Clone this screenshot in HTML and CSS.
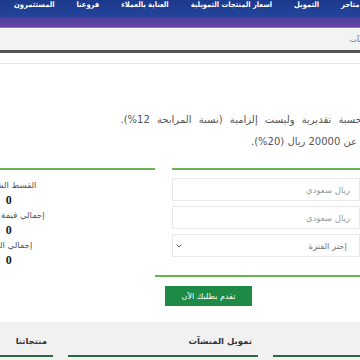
FILE: index.html
```html
<!DOCTYPE html>
<html lang="ar" dir="rtl">
<head>
    <meta charset="UTF-8">
    <title>حاسبة التمويل</title>
    <meta name="viewport" content="width=device-width, initial-scale=1.0">
    <link rel="stylesheet" href="styles.css">
</head>
<body>
    <header class="topbar">
        <nav class="inner nav">
            <a href="#">تملك متاجر</a>
            <a href="#">التمويل</a>
            <a href="#">اسعار المنتجات التمويلية</a>
            <a href="#">العناية بالعملاء</a>
            <a href="#">فروعنا</a>
            <a href="#">المستثمرون</a>
        </nav>
    </header>
    <div class="band"></div>

    <div class="crumbs">
        <div class="inner crumbs-text">تمويل المنشآت</div>
    </div>
    <div class="rule"></div>

    <main class="inner">
        <p class="note">
            <span class="spaced">* النتائج الظاهرة في هذه الحسبة تقديرية وليست إلزامية (نسبة المرابحة 12%).</span><br>
            * يجب ألا يقل مبلغ الدفعة الأولى عن 20000 ريال (20%).
        </p>

        <section class="calc">
            <div class="form-col">
                <div class="row">
                    <label>قيمة المنتج</label>
                    <input type="text" placeholder="ريال سعودي">
                </div>
                <div class="row">
                    <label>الدفعة الأولى</label>
                    <input type="text" placeholder="ريال سعودي">
                </div>
                <div class="row">
                    <label>فترة التمويل</label>
                    <div class="select">
                        <span>إختر الفترة</span>
                        <svg width="6" height="4" viewBox="0 0 6 4"><path d="M0.5 0.5 L3 3 L5.5 0.5" fill="none" stroke="#666" stroke-width="1"/></svg>
                    </div>
                </div>
            </div>

            <div class="result-col">
                <div class="label">القسط الشهري</div>
                <div class="value">0</div>
                <div class="label">إجمالي قيمة التمويل</div>
                <div class="value">0</div>
                <div class="label">إجمالي المبلغ</div>
                <div class="value">0</div>
            </div>
        </section>

        <div class="actions">
            <button>تقدم بطلبك الآن</button>
        </div>
    </main>

    <footer class="footer">
        <div class="inner cols">
            <div class="col"><h4>عن البنك</h4></div>
            <div class="col"><h4>تمويل المنشآت</h4></div>
            <div class="col"><h4>منتجاتنا</h4></div>
        </div>
    </footer>
</body>
</html>
```

FILE: styles.css
```css
html, body {
    margin: 0;
    width: 360px;
    height: 360px;
    overflow: hidden;
    background: #fff;
    font-family: "DejaVu Sans", "Noto Sans", sans-serif;
}

.inner {
    width: 600px;
    margin-right: -103px;
    box-sizing: border-box;
}

.topbar {
    height: 17px;
    background: linear-gradient(#1b3a8c, #24449c);
    overflow: hidden;
}

.nav {
    display: flex;
    gap: 22px;
    padding-right: 85px;
    white-space: nowrap;
}

.nav a {
    color: #fff;
    text-decoration: none;
    font-family: "DejaVu Sans Condensed", "DejaVu Sans", sans-serif;
    font-size: 7.5px;
    line-height: 9px;
    font-weight: bold;
}

.band {
    height: 10px;
    background: linear-gradient(#4f3c9a, #6448a8);
    border-bottom: 1px solid #8a78bf;
}

.crumbs {
    margin-top: 1px;
    height: 21px;
    background: #f3f3f3;
    border-bottom: 3px solid #555;
}

.crumbs-text {
    padding-right: 63px;
    font-size: 8px;
    line-height: 22px;
    color: #777;
}

.rule {
    margin-top: 10px;
    height: 1px;
    background: #f1e3c6;
}

.note {
    margin: 45px -32px 0 0;
    font-size: 10px;
    line-height: 22px;
    color: #555;
}

.note .spaced {
    word-spacing: 4px;
}

.calc {
    display: grid;
    grid-template-columns: 1fr 1fr;
    gap: 17px;
    margin-top: 15px;
}

.form-col {
    border-top: 2px solid #68b44e;
    padding-top: 8px;
    display: flex;
    flex-direction: column;
    gap: 5px;
}

.row {
    display: flex;
    align-items: center;
}

.row label {
    width: 95px;
    font-size: 8px;
    color: #555;
    padding-right: 8px;
}

.row input, .select {
    width: 188px;
    height: 23px;
    box-sizing: border-box;
    border: 1px solid #e8e8e8;
    background: #fff;
    font-family: inherit;
    font-size: 8.5px;
    padding: 0 9px;
    color: #444;
}

.row input::placeholder {
    color: #999;
}

.select {
    display: flex;
    align-items: center;
    justify-content: space-between;
    padding: 0 12px 0 3px;
    color: #777;
}

.result-col {
    border-top: 2px solid #68b44e;
    padding-top: 9px;
    text-align: center;
}

.result-col .label {
    font-size: 8.5px;
    line-height: 12px;
    color: #555;
}

.result-col .value {
    font-family: "Liberation Serif", serif;
    font-weight: bold;
    font-size: 12px;
    line-height: 18px;
    color: #222;
}

.actions {
    width: 308px;
    margin-top: 6px;
    border-top: 2px solid #68b44e;
    padding: 9px 0 0 10px;
    display: flex;
    justify-content: flex-end;
    box-sizing: border-box;
}

.actions button {
    background: #1d8a45;
    color: #fff;
    border: none;
    font-family: inherit;
    font-size: 8px;
    width: 87px;
    height: 20px;
    padding: 0;
}

.footer {
    margin-top: 16px;
    background: #f1f1f1;
    height: 40px;
}

.cols {
    display: grid;
    grid-template-columns: 1fr 1fr 1fr;
    gap: 15px;
}

.col {
    padding-top: 12px;
    border-bottom: 2px solid #2a6a43;
    height: 21px;
}

.col h4 {
    margin: 0;
    padding-right: 6px;
    font-size: 8.5px;
    line-height: 14px;
    color: #333;
}
```
